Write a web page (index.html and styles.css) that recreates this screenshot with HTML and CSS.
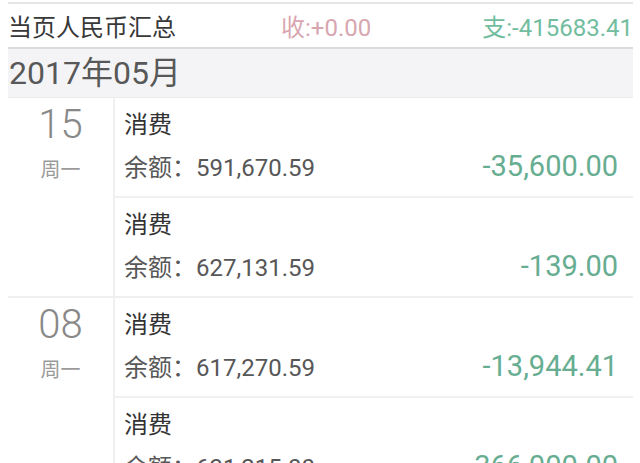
FILE: index.html
```html
<!DOCTYPE html>
<html lang="zh-CN">
<head>
    <meta charset="UTF-8">
    <meta name="viewport" content="width=device-width, initial-scale=1.0">
    <title>账单明细</title>
    <link rel="stylesheet" href="styles.css">
</head>
<body>

    <div class="page">
        <div class="summary">
            <span class="summary-label">当页人民币汇总</span>
            <span class="income">收:+0.00</span>
            <span class="expense">支:-415683.41</span>
        </div>

        <div class="month">2017年05月</div>

        <div class="day">
            <div class="date-col">
                <div class="date-num">15</div>
                <div class="weekday">周一</div>
            </div>
            <div class="entries">
                <div class="entry">
                    <div class="entry-title">消费</div>
                    <div class="entry-line">
                        <span class="balance">余额：591,670.59</span>
                        <span class="amount">-35,600.00</span>
                    </div>
                </div>
                <div class="entry">
                    <div class="entry-title">消费</div>
                    <div class="entry-line">
                        <span class="balance">余额：627,131.59</span>
                        <span class="amount">-139.00</span>
                    </div>
                </div>
            </div>
        </div>

        <div class="day">
            <div class="date-col">
                <div class="date-num">08</div>
                <div class="weekday">周一</div>
            </div>
            <div class="entries">
                <div class="entry">
                    <div class="entry-title">消费</div>
                    <div class="entry-line">
                        <span class="balance">余额：617,270.59</span>
                        <span class="amount">-13,944.41</span>
                    </div>
                </div>
                <div class="entry">
                    <div class="entry-title">消费</div>
                    <div class="entry-line">
                        <span class="balance">余额：631,215.00</span>
                        <span class="amount">-366,000.00</span>
                    </div>
                </div>
            </div>
        </div>
    </div>

</body>
</html>
```

FILE: styles.css
```css
body {
    margin: 0;
    padding: 0;
    background-color: #fff;
    font-family: Roboto, "Noto Sans CJK SC", sans-serif;
    overflow: hidden;
}

.page {
    margin: 0 7px 0 8px;
    padding-top: 2px;
}

/* page totals */
.summary {
    display: grid;
    grid-template-columns: 273px 1fr auto;
    align-items: center;
    height: 43px;
    border-top: 2px solid #e6e6e6;
    font-size: 24px;
}

.summary-label {
    color: #383838;
}

.income {
    color: #d8a6b0;
}

.expense {
    color: #72bd9f;
}

.month {
    height: 48px;
    line-height: 48px;
    padding-left: 1px;
    background-color: #f4f4f6;
    border-top: 2px solid #dcdcdc;
    border-bottom: 1px solid #ececec;
    font-size: 32px;
    color: #585858;
}

/* one block per day */
.day {
    display: flex;
    border-bottom: 2px solid #efefef;
}

.date-col {
    width: 105px;
    flex-shrink: 0;
    border-right: 2px solid #f0f0f0;
    text-align: center;
    padding-top: 8px;
}

.date-num {
    font-size: 40px;
    font-weight: 300;
    line-height: 38px;
    color: #888;
}

.weekday {
    margin-top: 16px;
    font-size: 20px;
    line-height: 20px;
    color: #9a9a9a;
}

.entries {
    flex: 1;
}

.entry {
    height: 98px;
    box-sizing: border-box;
    padding: 12px 15px 0 9px;
}

.entry + .entry {
    height: 100px;
    border-top: 2px solid #f0f0f0;
}

.entry-title {
    font-size: 24px;
    line-height: 30px;
    color: #333;
}

.entry-line {
    display: flex;
    justify-content: space-between;
    align-items: baseline;
    margin-top: 9px;
}

.balance {
    font-size: 24px;
    line-height: 34px;
    color: #575757;
}

.amount {
    font-size: 29px;
    line-height: 34px;
    color: #66ad91;
}
```
